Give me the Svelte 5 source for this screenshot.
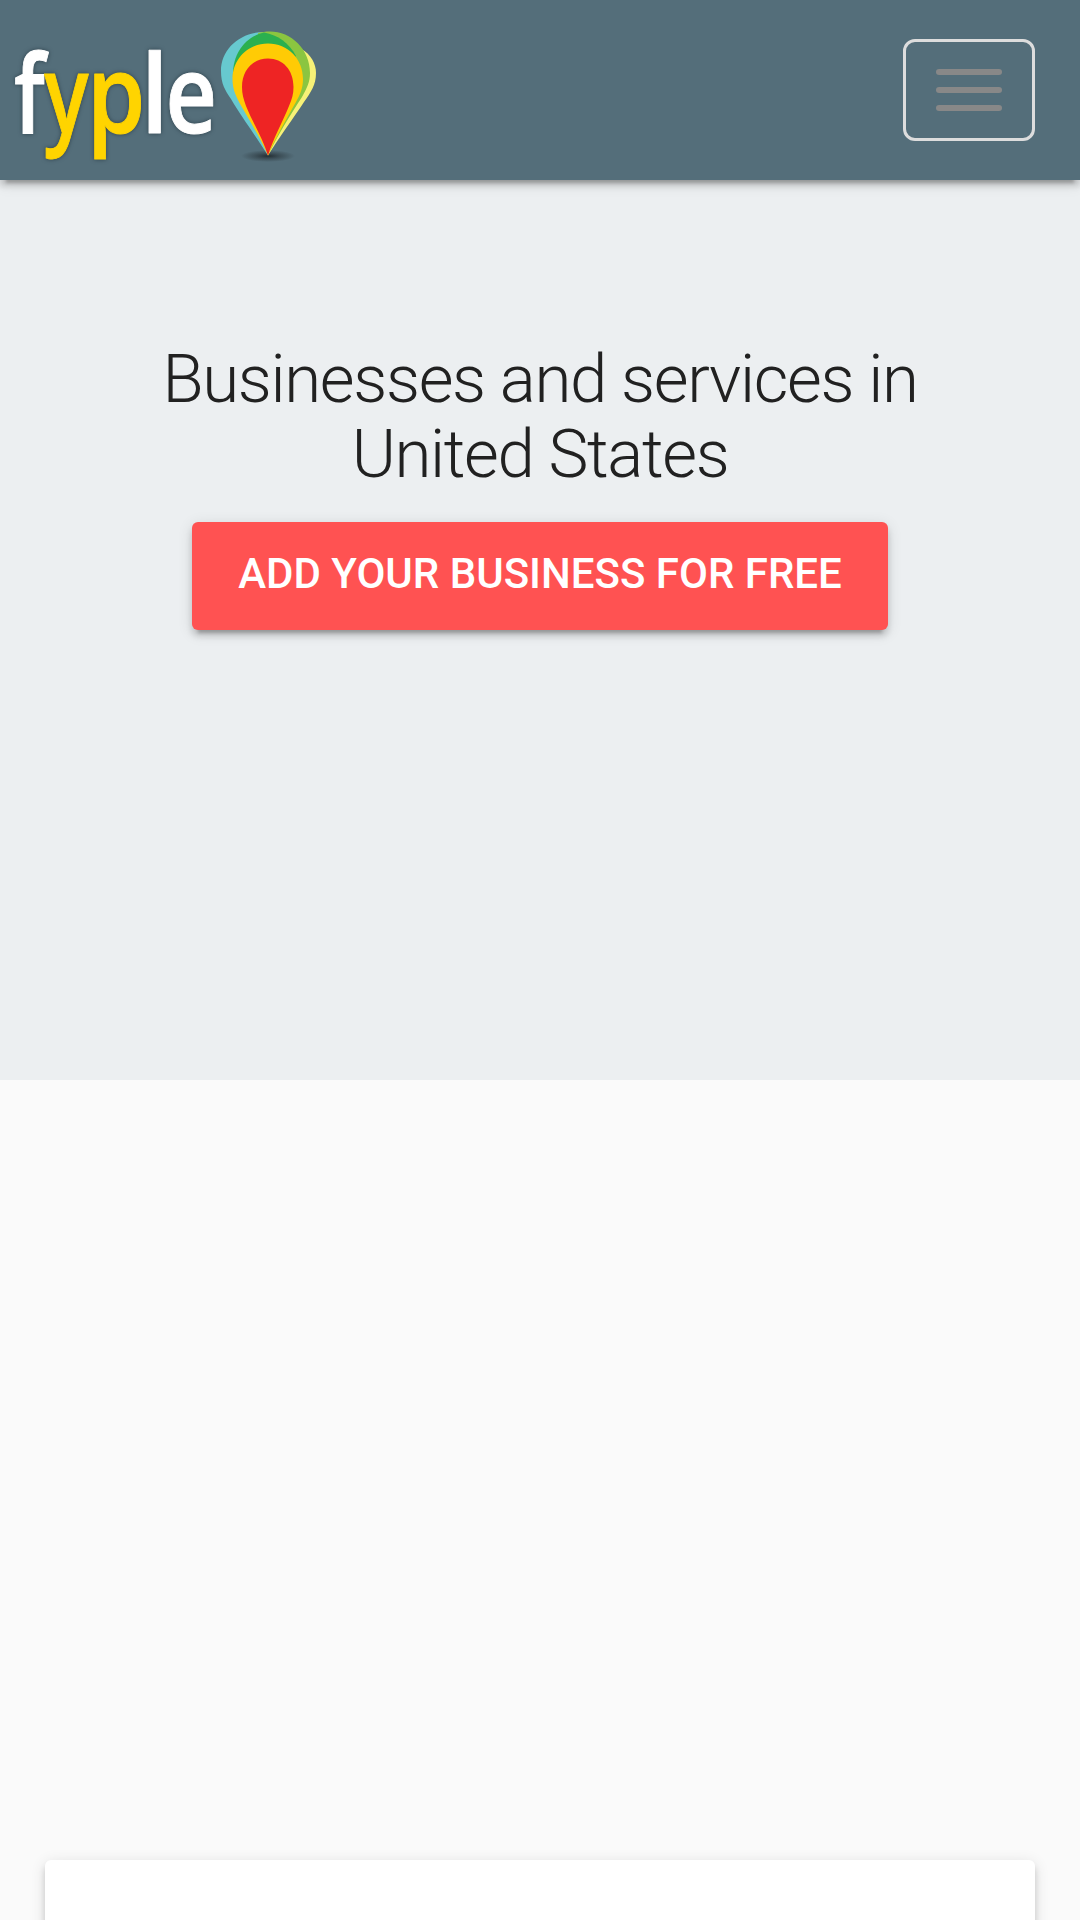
<script lang="ts">
  interface Letter {
    char: string;
    x: number;
    stretch: number;
    yellow?: boolean;
  }

  // The wordmark is condensed, each letter by its own amount
  const letters: Letter[] = [
    { char: "f", x: 14, stretch: 0.78 },
    { char: "y", x: 44.3, stretch: 0.76, yellow: true },
    { char: "p", x: 87, stretch: 0.86, yellow: true },
    { char: "l", x: 141, stretch: 0.9 },
    { char: "e", x: 165.4, stretch: 0.82 },
  ];

  const bars = [0, 1, 2];
</script>

<svelte:head>
  <title>fyple</title>
</svelte:head>

<div class="page">
  <header class="header">
    <a class="logo" href="#home" aria-label="fyple">
      <svg width="330" height="180" viewBox="0 0 330 180">
        <defs>
          <radialGradient id="ground">
            <stop offset="0" stop-color="#1d262b" stop-opacity="0.9" />
            <stop offset="0.5" stop-color="#2b373d" stop-opacity="0.5" />
            <stop offset="1" stop-color="#2b373d" stop-opacity="0" />
          </radialGradient>
        </defs>

        <g class="word">
          {#each letters as letter (letter.char)}
            <text class:yellow={letter.yellow} transform="translate({letter.x} 133) scale({letter.stretch} 1)">{letter.char}</text>
          {/each}
        </g>

        <ellipse cx="268" cy="156" rx="27" ry="6" fill="url(#ground)" />
        <!-- pin layers, back to front -->
        <path fill="#f7f177" d="M268 155.500 C279 138 294 117 304 102 C311 92 316 85 316 73 C316 64 311 54 301 49 L280 80 Z" />
        <path fill="#67c9cf" d="M268 155.500 C257 138 241 116 231 99 C225 90 221 84 221 71 C221 49 240 32 264 32 L285 50 Z" />
        <path fill="#8bc540" d="M268 155.500 C277 136 291 114 302 97 C307 88 310 82 310 73 C310 49 291 31.500 270 31.500 C265 31.500 262 32 258 33 Z" />
        <path fill="#2bb04f" d="M233 77 C232 54 245 37 264 32.500 C278 35 289 43 296 56 L268 85 Z" />
        <path fill="#ffcb05" d="M268 155.500 C260 137 247 116 239 102 C235 94 232.500 88 232.500 79 C232.500 59 248 43.500 268 43.500 C288 43.500 303 59 303 79 C303 88 300 95 296 102 C288 116 276 137 268 155.500 Z" />
        <path fill="#ee2424" d="M268 155.500 C263 139 252 121 246 106 C243.500 99 242 94 242 87 C242 70 253 58.500 268 58.500 C283 58.500 293.500 70 293.500 87 C293.500 94 292 99 289 106 C283 121 273 139 268 155.500 Z" />
      </svg>
    </a>

    <button class="toggle" aria-label="Toggle navigation">
      {#each bars as bar (bar)}
        <span class="bar"></span>
      {/each}
    </button>
  </header>

  <section class="hero">
    <h1>Businesses and services in United States</h1>
    <a class="btn" href="#add">Add your business for free</a>
  </section>

  <main class="content">
    <div class="card"></div>
  </main>
</div>

<style>
  :global(body) {
    margin: 0;
    background: #fafafa;
  }

  .page {
    display: flex;
    flex-direction: column;
    height: 1920px;
    overflow: hidden;
    font-family: Roboto, sans-serif;
    color: #212121;
    background: #fafafa;
  }

  .header {
    position: relative;
    z-index: 1;
    display: flex;
    flex: none;
    justify-content: space-between;
    align-items: center;
    box-sizing: border-box;
    height: 180px;
    padding-right: 45px;
    background: #546e7a;
  }

  /* raised surfaces */
  .header,
  .btn,
  .card {
    box-shadow:
      0 6px 6px 0 rgba(0, 0, 0, 0.14),
      0 9px 3px -6px rgba(0, 0, 0, 0.2),
      0 3px 15px 0 rgba(0, 0, 0, 0.12);
  }

  .logo,
  .logo svg {
    display: block;
  }

  .word {
    font-family: "Open Sans", "Noto Sans", sans-serif;
    font-size: 109px;
    font-weight: 600;
    fill: #fff;
    stroke: #fff;
    stroke-width: 1;
    stroke-linejoin: round;
    filter: drop-shadow(0 0 2px rgba(20, 35, 45, 0.6));
  }

  .yellow {
    fill: #ffd400;
    stroke: #ffd400;
  }

  .toggle {
    display: flex;
    flex-direction: column;
    gap: 12px;
    padding: 27px 30px;
    border: 3px solid #ddd;
    border-radius: 12px;
    background: transparent;
  }

  .bar {
    width: 66px;
    height: 6px;
    border-radius: 3px;
    background: #888;
  }

  .hero {
    display: flex;
    flex: none;
    flex-direction: column;
    align-items: center;
    box-sizing: border-box;
    height: 900px;
    padding: 162px 45px 0;
    background: #eceff1;
  }

  h1 {
    width: 800px;
    margin: 0 0 30px;
    font-size: 67.2px;
    font-weight: 300;
    line-height: 75px;
    letter-spacing: -0.02em;
    text-align: center;
  }

  .btn {
    box-sizing: border-box;
    width: 696px;
    height: 108px;
    border-radius: 6px;
    font-size: 42px;
    font-weight: 500;
    line-height: 104px;
    text-align: center;
    text-decoration: none;
    text-transform: uppercase;
    white-space: nowrap;
    color: #fff;
    background: #ff5252;
  }

  .content {
    padding: 780px 45px 0;
  }

  .card {
    height: 300px;
    border-radius: 6px;
    background: #fff;
  }
</style>
